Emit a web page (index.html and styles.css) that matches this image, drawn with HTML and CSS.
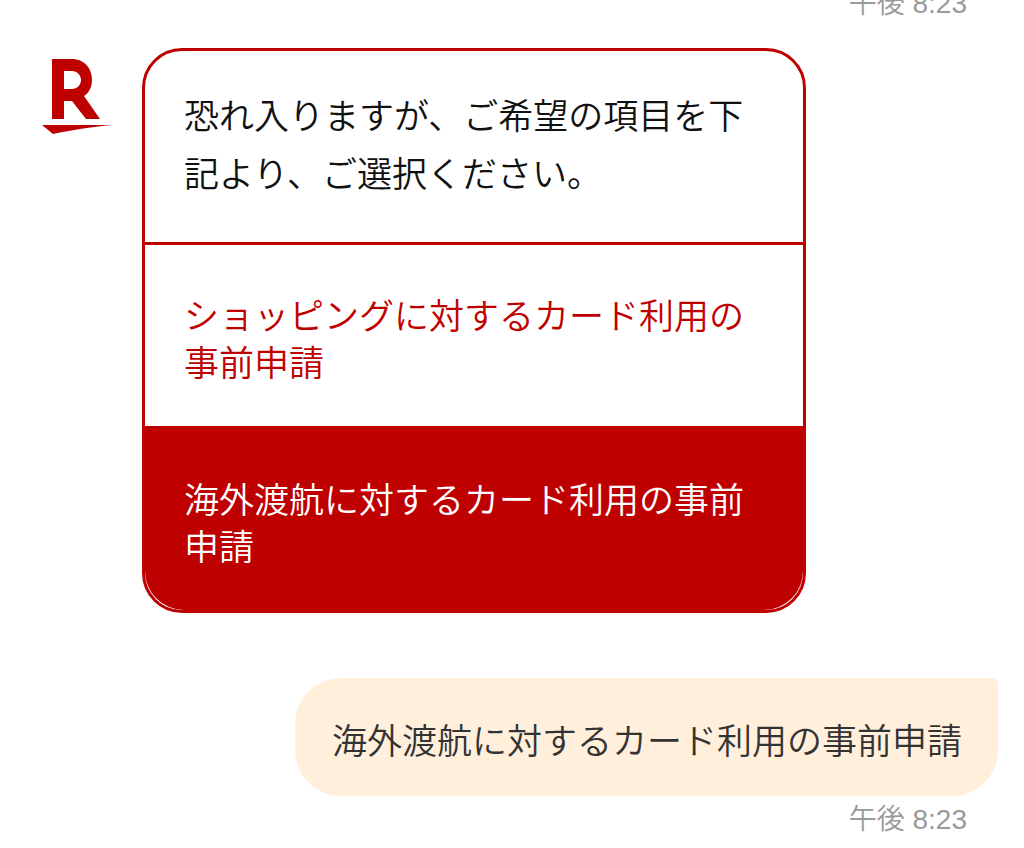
FILE: index.html
```html
<!DOCTYPE html>
<html lang="ja">
<head>
  <meta charset="UTF-8" />
  <meta name="viewport" content="width=device-width, initial-scale=1.0"/>
  <title>チャット</title>
  <link rel="stylesheet" href="styles.css">
</head>
<body>

<main class="chat">
  <time class="time time-first" datetime="20:23">午後 8:23</time>

  <div class="bot-row">
    <svg class="avatar" viewBox="0 0 70 75" role="img" aria-label="Rakuten">
      <path fill-rule="evenodd" d="M10 0H30C42 0 50 9 50 21C50 28 47 34 42 37L58 60H44L30 42H22V60H10ZM22 12V30H30C35 30 39 26 39 21C39 16 35 12 30 12Z"/>
      <path d="M0 66H70C48 68 30 71 11 75Z"/>
    </svg>
    <div class="card">
      <p class="card-text">恐れ入りますが、ご希望の項目を下記より、ご選択ください。</p>
      <button class="option" type="button">ショッピングに対するカード利用の事前申請</button>
      <button class="option selected" type="button">海外渡航に対するカード利用の事前申請</button>
    </div>
  </div>

  <p class="bubble">海外渡航に対するカード利用の事前申請</p>
  <time class="time" datetime="20:23">午後 8:23</time>
</main>

</body>
</html>
```
FILE: styles.css
```css
* {
  box-sizing: border-box;
}

body {
  margin: 0;
  background: #fff;
  font-family: "Noto Sans CJK JP", sans-serif;
  font-size: 35px;
  font-weight: 350;
  color: #111;
}

p {
  margin: 0;
}

.chat {
  display: flex;
  flex-direction: column;
  padding: 0 26px 12px 42px;
  overflow: hidden;
}

.time {
  align-self: flex-end;
  margin-top: 8px;
  padding-right: 31px;
  font-family: "Liberation Sans", "Noto Sans CJK JP", sans-serif;
  font-size: 28px;
  line-height: 32px;
  color: #999;
}

/* scrolled partly out of view */
.time-first {
  margin-top: -12px;
}

.bot-row {
  display: flex;
  align-items: flex-start;
  gap: 30px;
  margin-top: 28px;
}

.avatar {
  flex: none;
  width: 70px;
  margin-top: 11px;
  fill: #bf0000;
}

.card {
  flex: 1;
  max-width: 664px;
  border: 3px solid #bf0000;
  border-radius: 40px;
}

.card-text {
  padding: 34px 39px 41px;
  line-height: 58px;
}

.option {
  display: block;
  width: 100%;
  padding: 45px 39px 42px;
  border: none;
  border-top: 3px solid #bf0000;
  background: none;
  font: inherit;
  line-height: 47px;
  text-align: left;
  color: #bf0000;
  cursor: pointer;
}

.option.selected {
  background: #bf0000;
  border-radius: 0 0 39px 39px;
  color: #fff;
}

.bubble {
  align-self: flex-end;
  margin-top: 65px;
  padding: 38px 36px 34px 37px;
  border-radius: 46px 5px 46px 46px;
  background: #ffefdb;
  line-height: 46px;
  color: #333;
}
```
